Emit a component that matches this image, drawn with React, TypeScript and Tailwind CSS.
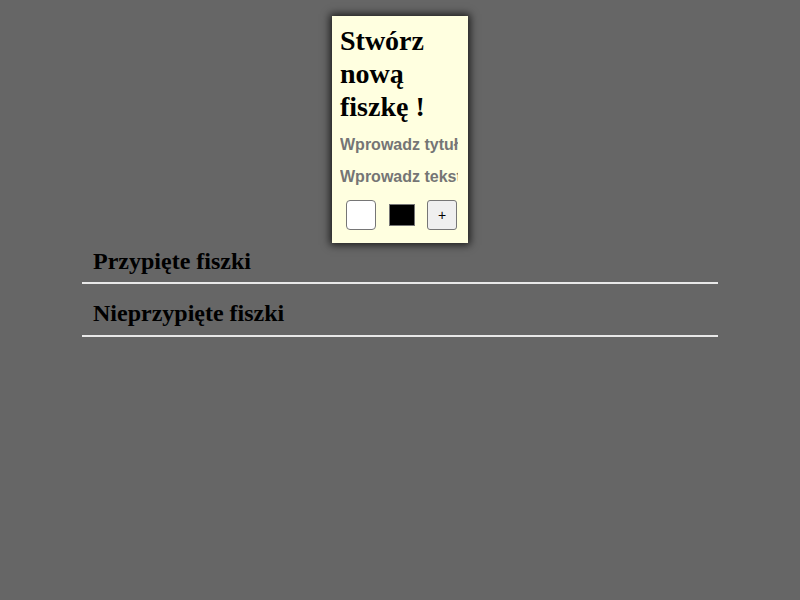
import React from 'react'

const serif = { fontFamily: '"Liberation Serif", "Times New Roman", serif' }
const sans = { fontFamily: '"Liberation Sans", Arial, sans-serif' }

const Section: React.FC<{ title: string; first?: boolean }> = ({ title, first }) => (
	<div className={`${first ? 'pt-[4px] pb-[7px]' : 'pt-[15px] pb-[8px]'} px-[11px] border-b-2 border-[#e8e8e8]`}>
		<h2 className="text-[24px] leading-[28px] font-bold text-black" style={serif}>
			{title}
		</h2>
	</div>
)

export default function App() {
	const [title, setTitle] = React.useState('')
	const [text, setText] = React.useState('')

	return (
		<div className="min-h-screen w-full bg-[#666666] pt-4" style={serif}>
			{/* formularz nowej fiszki */}
			<div className="mx-auto w-[136px] bg-[#ffffe0] shadow-[0_0_8px_2px_rgba(0,0,0,0.75)] px-2 pt-[8px] pb-[13px] relative z-10">
				<h1 className="text-[28px] leading-[33px] font-bold text-black" style={serif}>
					Stwórz nową fiszkę !
				</h1>
				<div className="flex flex-col mt-[10px]" style={sans}>
					<input
						value={title}
						onChange={(e) => setTitle(e.target.value)}
						placeholder="Wprowadz tytuł"
						className="w-[118px] h-[24px] bg-transparent outline-none text-[16px] font-bold text-[#333] placeholder:text-[#757575]"
					/>
					<input
						value={text}
						onChange={(e) => setText(e.target.value)}
						placeholder="Wprowadz tekst"
						className="w-[118px] h-[24px] mt-[8px] bg-transparent outline-none text-[16px] font-bold text-[#333] placeholder:text-[#757575]"
					/>
				</div>
				<div className="flex items-center mt-[11px] pl-[6px]">
					<div className="w-[30px] h-[30px] bg-white border border-[#767676] rounded-[4px]" />
					<div className="w-[26px] h-[22px] bg-black border border-[#767676] ml-[13px]" />
					<button
						className="w-[30px] h-[30px] ml-[12px] bg-[#efefef] border border-[#767676] rounded-[3px] text-[14px] text-black flex items-center justify-center"
						style={sans}
					>
						+
					</button>
				</div>
			</div>

			<div className="mx-auto w-[636px]">
				<Section title="Przypięte fiszki" first />
				<Section title="Nieprzypięte fiszki" />
			</div>
		</div>
	)
}
